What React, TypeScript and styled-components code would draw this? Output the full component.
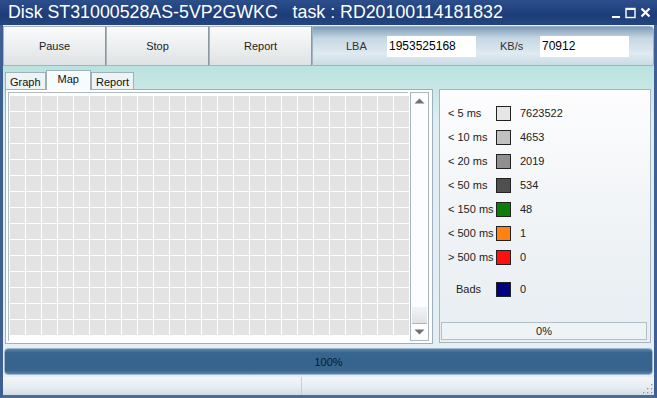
import React from "react";
import styled, { createGlobalStyle } from "styled-components";

const Global = createGlobalStyle`
  html, body { margin: 0; padding: 0; overflow: hidden; background: #fff; }
  * { box-sizing: border-box; }
`;

const Window = styled.div`
  width: 657px;
  height: 398px;
  display: flex;
  flex-direction: column;
  background: linear-gradient(180deg, #b9e2de 66px, #dfeef0 120px, #e6eef4 100%);
  border-left: 3px solid #3d5f93;
  border-right: 3px solid #3d5f93;
  border-bottom: 3px solid #4b6a98;
  font-family: "Liberation Sans", Arial, sans-serif;
`;

const TitleBar = styled.div`
  height: 25px;
  margin: 0 -3px;
  padding: 0 8px;
  display: flex;
  align-items: center;
  justify-content: space-between;
  background: linear-gradient(180deg, #2c4f8c 0%, #1d3d78 60%, #24467f 100%);
  color: #fff;
  font-size: 17.8px;
  white-space: pre;
`;

const TitleButtons = styled.div`
  display: flex;
  align-items: center;
  gap: 4px;
  margin-right: -2px;
`;

const Toolbar = styled.div`
  height: 41px;
  display: flex;
  background: #e8eef2;
`;

const ToolButton = styled.div`
  width: 104px;
  height: 40px;
  margin-top: 1px;
  display: flex;
  align-items: center;
  justify-content: center;
  font-size: 11px;
  color: #222;
  background: linear-gradient(180deg, #fbfbfb 0%, #eef0f1 45%, #dfe2e4 100%);
  border: 1px solid #a9b3ba;
  border-right-color: #8c979f;
`;

const InfoPanel = styled.div`
  flex: 1;
  margin-top: 1px;
  display: flex;
  align-items: center;
  padding-left: 33px;
  background: linear-gradient(180deg, #7d9cb8 0%, #c6d7e3 30%, #dfeaf1 70%, #cadbe5 100%);
  border: 1px solid #9fb2c2;
  border-radius: 0 4px 0 0;
`;

const FieldLabel = styled.span<{ $w: number }>`
  width: ${(p) => p.$w}px;
  font-size: 11px;
  color: #333;
`;

const Field = styled.div`
  width: 89px;
  height: 21px;
  background: #fff;
  font-size: 12px;
  color: #000;
  padding: 3px 2px;
  margin-right: 24px;
`;

const TabStrip = styled.div`
  height: 23px;
  display: flex;
  align-items: flex-end;
  padding-left: 2px;
`;

const Tab = styled.div<{ $active?: boolean }>`
  height: ${(p) => (p.$active ? 20 : 17)}px;
  padding: 0 ${(p) => (p.$active ? 11 : 4)}px;
  font-size: 11px;
  color: #111;
  display: flex;
  align-items: ${(p) => (p.$active ? "flex-start" : "center")};
  padding-top: ${(p) => (p.$active ? 2 : 1)}px;
  background: ${(p) => (p.$active ? "#f8fbfb" : "#eef4f4")};
  border: 1px solid #9db1bb;
  border-bottom: none;
  margin-bottom: ${(p) => (p.$active ? -1 : 0)}px;
  position: relative;
  z-index: ${(p) => (p.$active ? 1 : 0)};
`;

const Content = styled.div`
  height: 256px;
  display: flex;
  gap: 6px;
  padding: 0 3px 0 2px;
`;

const MapFrame = styled.div`
  width: 428px;
  height: 255px;
  display: flex;
  padding: 2px;
  gap: 2px;
  background: #fff;
  border: 1px solid #9fb0bc;
`;

const Grid = styled.div`
  width: 400px;
  display: grid;
  grid-template-columns: repeat(25, 15px);
  grid-auto-rows: 15px;
  gap: 1px;
  padding: 3px 1px 0 1px;
  background: #fff;
  border-left: 1px solid #b0bcc4;
  border-top: 1px solid #b0bcc4;
  align-content: start;
`;

const Cell = styled.div`
  background: #e3e3e3;
`;

const ScrollBar = styled.div`
  width: 19px;
  display: flex;
  flex-direction: column;
  justify-content: space-between;
  border: 1px solid #a8b6c0;
  background: #fdfdfd;
`;

const ScrollArrow = styled.div`
  height: 16px;
  display: flex;
  align-items: center;
  justify-content: center;
`;

const ScrollBottom = styled.div`
  display: flex;
  flex-direction: column;
`;

const Thumb = styled.div`
  height: 17px;
  margin: 0 1px;
  background: linear-gradient(180deg, #f1f3f4, #e0e3e5);
  border-bottom: 1px solid #a8b6c0;
`;

const Legend = styled.div`
  flex: 1;
  height: 254px;
  display: flex;
  flex-direction: column;
  padding: 11px 3px 2px 8px;
  border: 1px solid #a7b5bf;
  background: linear-gradient(180deg, #fdfdfe 0%, #eef2f5 60%, #e8eef2 100%);
`;

const LegendRow = styled.div<{ $gap?: number }>`
  display: flex;
  align-items: center;
  height: 24px;
  margin-top: ${(p) => p.$gap ?? 0}px;
  font-size: 11px;
  color: #222;
`;

const LegendLabel = styled.span<{ $indent?: number }>`
  width: 48px;
  padding-left: ${(p) => p.$indent ?? 0}px;
  white-space: nowrap;
`;

const Swatch = styled.span<{ $c: string }>`
  width: 15px;
  height: 15px;
  background: ${(p) => p.$c};
  border: 1px solid #222;
  margin-right: 9px;
`;

const SmallProgress = styled.div`
  margin-top: auto;
  margin-left: -7px;
  height: 18px;
  border: 1px solid #b3bfc7;
  background: #eef3f5;
  font-size: 11px;
  color: #222;
  display: flex;
  align-items: center;
  justify-content: center;
`;

const BigProgress = styled.div`
  height: 27px;
  margin: 3px 1px 0 1px;
  border-radius: 4px;
  background: linear-gradient(180deg, #5d84aa 0%, #36658f 15%, #36648e 85%, #5c83a8 100%);
  border: 1px solid #9eb7cc;
  display: flex;
  align-items: center;
  justify-content: center;
  font-size: 11px;
  color: #0c1a28;
`;

const StatusBar = styled.div`
  flex: 1;
  margin-top: 2px;
  display: flex;
  background: linear-gradient(180deg, #f3f6f8 0%, #e6ecf0 60%, #d3dde4 100%);
`;

const StatusPane = styled.div<{ $w?: number }>`
  width: ${(p) => (p.$w ? `${p.$w}px` : "auto")};
  flex: ${(p) => (p.$w ? "none" : 1)};
  border-right: ${(p) => (p.$w ? "1px solid #c5cfd6" : "none")};
  display: flex;
  align-items: flex-end;
  justify-content: flex-end;
`;

const legend = [
  { l: "< 5 ms", c: "#e6e6e6", v: "7623522" },
  { l: "< 10 ms", c: "#c0c0c0", v: "4653" },
  { l: "< 20 ms", c: "#8f8f8f", v: "2019" },
  { l: "< 50 ms", c: "#4f4f4f", v: "534" },
  { l: "< 150 ms", c: "#0a7d0a", v: "48" },
  { l: "< 500 ms", c: "#ff8212", v: "1" },
  { l: "> 500 ms", c: "#ff1010", v: "0" },
];

export default function App() {
  const cells = Array.from({ length: 25 * 15 });
  return (
    <>
      <Global />
      <Window>
        <TitleBar>
          <span>{"Disk ST31000528AS-5VP2GWKC   task : RD20100114181832"}</span>
          <TitleButtons>
            <svg width="10" height="12" viewBox="0 0 10 12">
              <rect x="1" y="9" width="8" height="2" fill="#fff" />
            </svg>
            <svg width="11" height="12" viewBox="0 0 11 12">
              <rect x="1" y="1.5" width="9" height="9" fill="none" stroke="#fff" strokeWidth="1.4" />
              <rect x="1" y="1" width="9" height="2" fill="#fff" />
            </svg>
            <svg width="11" height="12" viewBox="0 0 11 12">
              <path d="M1.5 1.5 L9.5 9.5 M9.5 1.5 L1.5 9.5" stroke="#fff" strokeWidth="2.2" />
            </svg>
          </TitleButtons>
        </TitleBar>
        <Toolbar>
          <ToolButton>Pause</ToolButton>
          <ToolButton>Stop</ToolButton>
          <ToolButton>Report</ToolButton>
          <InfoPanel>
            <FieldLabel $w={41}>LBA</FieldLabel>
            <Field>1953525168</Field>
            <FieldLabel $w={40}>KB/s</FieldLabel>
            <Field>70912</Field>
          </InfoPanel>
        </Toolbar>
        <TabStrip>
          <Tab>Graph</Tab>
          <Tab $active>Map</Tab>
          <Tab>Report</Tab>
        </TabStrip>
        <Content>
          <MapFrame>
            <Grid>
              {cells.map((_, i) => (
                <Cell key={i} />
              ))}
            </Grid>
            <ScrollBar>
              <ScrollArrow>
                <svg width="11" height="6" viewBox="0 0 11 6">
                  <path d="M0.5 5.5 L5.5 0.5 L10.5 5.5 Z" fill="#707070" />
                </svg>
              </ScrollArrow>
              <ScrollBottom>
                <Thumb />
                <ScrollArrow>
                  <svg width="11" height="6" viewBox="0 0 11 6">
                    <path d="M0.5 0.5 L5.5 5.5 L10.5 0.5 Z" fill="#707070" />
                  </svg>
                </ScrollArrow>
              </ScrollBottom>
            </ScrollBar>
          </MapFrame>
          <Legend>
            {legend.map((r) => (
              <LegendRow key={r.l}>
                <LegendLabel>{r.l}</LegendLabel>
                <Swatch $c={r.c} />
                <span>{r.v}</span>
              </LegendRow>
            ))}
            <LegendRow $gap={8}>
              <LegendLabel $indent={8}>Bads</LegendLabel>
              <Swatch $c="#000080" />
              <span>0</span>
            </LegendRow>
            <SmallProgress>0%</SmallProgress>
          </Legend>
        </Content>
        <BigProgress>100%</BigProgress>
        <StatusBar>
          <StatusPane $w={299} />
          <StatusPane>
            <svg width="12" height="12" viewBox="0 0 12 12">
              {[
                [9, 1],
                [9, 5],
                [5, 5],
                [9, 9],
                [5, 9],
                [1, 9],
              ].map(([x, y], i) => (
                <rect key={i} x={x} y={y} width="2" height="2" fill="#fff" />
              ))}
              {[
                [10, 2],
                [10, 6],
                [6, 6],
                [10, 10],
                [6, 10],
                [2, 10],
              ].map(([x, y], i) => (
                <rect key={"d" + i} x={x - 1} y={y - 1} width="1.5" height="1.5" fill="#8a9aa6" />
              ))}
            </svg>
          </StatusPane>
        </StatusBar>
      </Window>
    </>
  );
}
